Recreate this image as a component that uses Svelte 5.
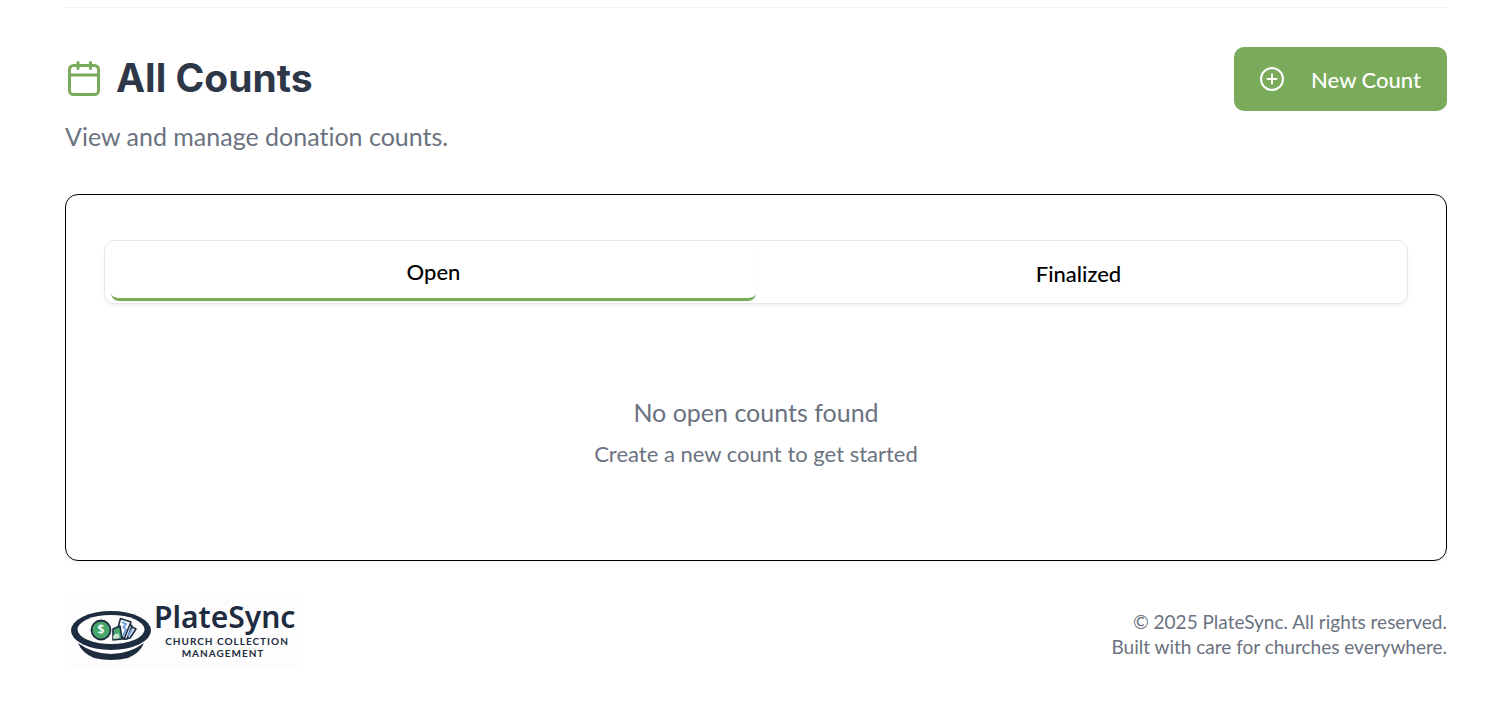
<script>
  const tabs = [
    { id: 'open', label: 'Open', title: 'No open counts found' },
    { id: 'finalized', label: 'Finalized', title: 'No finalized counts found' }
  ];
  let active = $state('open');
  let current = $derived(tabs.find((t) => t.id === active));
</script>

<div class="page">
  <main>
    <header class="heading">
      <div>
        <h1>
          <svg class="calendar" viewBox="0 0 38 38" fill="none" aria-hidden="true">
            <rect x="4.5" y="6.5" width="29" height="29" rx="4" />
            <path d="M4.500 16h29M13 3.500v6M25.500 3.500v6" />
          </svg>
          All Counts
        </h1>
        <p class="subtitle">View and manage donation counts.</p>
      </div>
      <button class="new" type="button">
        <svg viewBox="0 0 26 26" fill="none" aria-hidden="true">
          <circle cx="13" cy="13" r="11" />
          <path d="M13 8.500v9M8.500 13h9" />
        </svg>
        New Count
      </button>
    </header>

    <section class="card">
      <div class="tabs" role="tablist">
        {#each tabs as tab (tab.id)}
          <button
            type="button"
            role="tab"
            id="tab-{tab.id}"
            aria-controls="panel"
            aria-selected={active === tab.id}
            class:active={active === tab.id}
            onclick={() => (active = tab.id)}>{tab.label}</button>
        {/each}
      </div>
      <div class="empty" role="tabpanel" id="panel" aria-labelledby="tab-{active}">
        <p class="title">{current.title}</p>
        <p class="hint">Create a new count to get started</p>
      </div>
    </section>
  </main>

  <footer>
    <svg class="logo" viewBox="0 0 238 69" role="img" aria-label="PlateSync Church Collection Management">
      <rect width="238" height="69" fill="#fdfdfd" />
      <path d="M13 44Q28 55 46 55T79 44Q75 54 63 59Q55 61 46 61T29 59Q17 54 13 44Z" fill="#1e2c40" />
      <ellipse cx="46" cy="31.500" rx="40" ry="19.500" fill="#1e2c40" />
      <ellipse cx="46" cy="30.500" rx="33.500" ry="14.500" fill="#fdfdfd" />
      <g stroke="#1e2c40" stroke-width="1.600" stroke-linejoin="round">
        <path d="M60 40L67 28L71 30L65 39Z" fill="#e8f1fb" />
        <path d="M58 40L63 24L67 27L62 40Z" fill="#e8f1fb" />
        <path d="M52 32L55.500 19.500L66 23L59 40Z" fill="#f3f8fd" />
        <path d="M48 30L55 27L57 40L48 41Z" fill="#4ba873" />
      </g>
      <path d="M57 23L61 25L58.500 28L61 31L58 37M67 30L63 37" fill="none" stroke="#6c9bd8" stroke-width="1.800" />
      <path d="M48 39Q48 34 54 35L54.500 39L49 40Z" fill="#c8e5d1" />
      <circle cx="36" cy="31" r="9.500" fill="#48a86c" stroke="#1e2c40" stroke-width="1.800" />
      <text x="36" y="35" text-anchor="middle" class="coin">$</text>
      <text x="89" y="29" class="brand">PlateSync</text>
      <text x="162" y="46" text-anchor="middle" class="tag">CHURCH COLLECTION</text>
      <text x="158" y="58" text-anchor="middle" class="tag">MANAGEMENT</text>
    </svg>
    <p>© 2025 PlateSync. All rights reserved.<br />Built with care for churches everywhere.</p>
  </footer>
</div>

<style>
  :global(body) {
    margin: 0;
    background: #fff;
  }
  .page {
    padding: 7px 59px 48px 65px;
    font-family: Lato, sans-serif;
    font-variant-ligatures: none;
    color: #6b7280;
  }
  p,
  h1 {
    margin: 0;
  }
  button {
    font: inherit;
    cursor: pointer;
  }
  main {
    border-top: 1px solid #f0f1f3;
    padding-top: 39px;
  }
  .heading {
    display: flex;
    justify-content: space-between;
    align-items: flex-start;
    margin-bottom: 38px;
  }
  h1 {
    display: flex;
    align-items: center;
    gap: 13px;
    height: 62px;
    font: 700 39px/62px Inter, sans-serif;
    color: #2d3748;
  }
  .calendar {
    width: 38px;
    height: 38px;
    stroke: #7aab5a;
    stroke-width: 3;
    stroke-linecap: round;
  }
  .subtitle {
    margin-top: 7px;
    font-size: 25px;
    line-height: 40px;
  }
  .new {
    display: flex;
    align-items: center;
    gap: 26px;
    height: 64px;
    padding: 0 26px 0 25px;
    border: 0;
    border-radius: 10px;
    background: #7aab5a;
    color: #fff;
    font-size: 22px;
    font-weight: 500;
  }
  .new svg {
    width: 26px;
    height: 26px;
    stroke: #fff;
    stroke-width: 2;
    stroke-linecap: round;
  }
  .card {
    padding: 45px 38px 88px;
    border: 1px solid #000;
    border-radius: 13px;
    box-shadow: 0 2px 3px rgb(0 0 0 / 4%);
  }
  .tabs {
    display: grid;
    grid-template-columns: 1fr 1fr;
    height: 64px;
    box-sizing: border-box;
    padding: 2px 6px;
    border: 1px solid #e5e7eb;
    border-radius: 10px;
    box-shadow: 0 2px 3px rgb(0 0 0 / 5%);
  }
  .tabs button {
    margin-top: 2px;
    padding: 0;
    border: 0;
    border-radius: 8px;
    background: transparent;
    color: #000;
    font-size: 22px;
    font-weight: 500;
  }
  .tabs .active {
    border-bottom: 3px solid #7aab5a;
    box-shadow: 0 1px 2px rgb(0 0 0 / 4%);
  }
  .empty {
    padding-top: 88px;
    text-align: center;
  }
  .title {
    font-size: 25px;
    line-height: 40px;
  }
  .hint {
    margin-top: 4px;
    font-size: 22px;
    line-height: 36px;
  }
  footer {
    display: flex;
    justify-content: space-between;
    align-items: center;
    margin-top: 38px;
    font-size: 19px;
    line-height: 25px;
    text-align: right;
  }
  .logo {
    width: 238px;
    height: 69px;
    overflow: visible;
    font-family: "Noto Sans", sans-serif;
    font-weight: 600;
    fill: #1e2c40;
  }
  .brand {
    font-size: 30px;
  }
  .tag {
    font-family: Lato, sans-serif;
    font-size: 10px;
    font-weight: 700;
    letter-spacing: 1px;
  }
  .coin {
    font-size: 12px;
    fill: #fff;
  }
</style>
